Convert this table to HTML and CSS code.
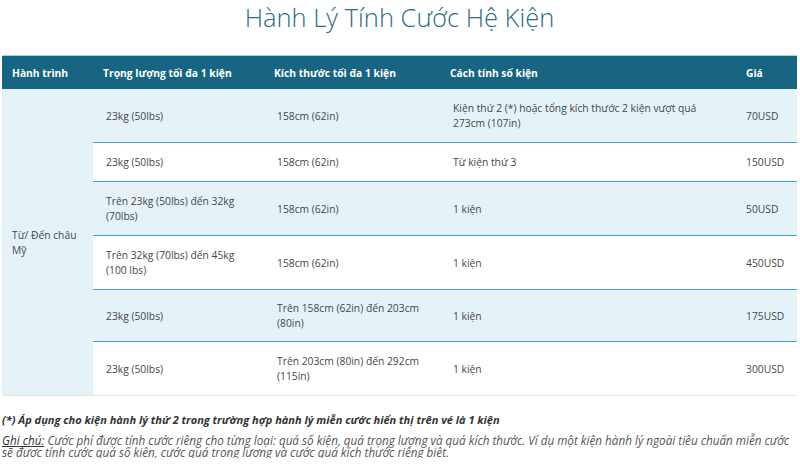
FILE: index.html
```html
<!DOCTYPE html>
<html lang="vi">
<head>
<meta charset="utf-8">
<title>Hành Lý Tính Cước Hệ Kiện</title>
<link rel="stylesheet" href="styles.css">
</head>
<body>
<div class="page">
  <h1 class="title">Hành Lý Tính Cước Hệ Kiện</h1>
  <table class="fees">
    <colgroup>
      <col class="c1"><col class="c2"><col class="c3"><col class="c4"><col class="c5">
    </colgroup>
    <thead>
      <tr>
        <th>Hành trình</th>
        <th>Trọng lượng tối đa 1 kiện</th>
        <th>Kích thước tối đa 1 kiện</th>
        <th>Cách tính số kiện</th>
        <th>Giá</th>
      </tr>
    </thead>
    <tbody>
      <tr class="alt first">
        <td class="route" rowspan="6">Từ/ Đến châu Mỹ</td>
        <td>23kg (50lbs)</td>
        <td>158cm (62in)</td>
        <td>Kiện thứ 2 (*) hoặc tổng kích thước 2 kiện vượt quá 273cm (107in)</td>
        <td class="price">70USD</td>
      </tr>
      <tr>
        <td>23kg (50lbs)</td>
        <td>158cm (62in)</td>
        <td>Từ kiện thứ 3</td>
        <td class="price">150USD</td>
      </tr>
      <tr class="alt">
        <td>Trên 23kg (50lbs) đến 32kg (70lbs)</td>
        <td>158cm (62in)</td>
        <td>1 kiện</td>
        <td class="price">50USD</td>
      </tr>
      <tr>
        <td>Trên 32kg (70lbs) đến 45kg (100 lbs)</td>
        <td>158cm (62in)</td>
        <td>1 kiện</td>
        <td class="price">450USD</td>
      </tr>
      <tr class="alt tight">
        <td>23kg (50lbs)</td>
        <td>Trên 158cm (62in) đến 203cm (80in)</td>
        <td>1 kiện</td>
        <td class="price">175USD</td>
      </tr>
      <tr class="last">
        <td>23kg (50lbs)</td>
        <td>Trên 203cm (80in) đến 292cm (115in)</td>
        <td>1 kiện</td>
        <td class="price">300USD</td>
      </tr>
    </tbody>
  </table>
  <p class="star">(*) Áp dụng cho kiện hành lý thứ 2 trong trường hợp hành lý miễn cước hiển thị trên vé là 1 kiện</p>
  <p class="note"><span class="note-label">Ghi chú:</span> Cước phí được tính cước riêng cho từng loại: quá số kiện, quá trọng lượng và quá kích thước. Ví dụ một kiện hành lý ngoài tiêu chuẩn miễn cước sẽ được tính cước quá số kiện, cước quá trọng lượng và cước quá kích thước riêng biệt.</p>
</div>
</body>
</html>
```

FILE: styles.css
```css
html, body {
  margin: 0;
  padding: 0;
  background: #ffffff;
}

body {
  font-family: "Open Sans", "Noto Sans", "DejaVu Sans", sans-serif;
  color: #474747;
}

.page {
  padding: 0 3px 0 2px;
}

.title {
  margin: 0;
  height: 55px;
  font-size: 25.5px;
  line-height: 34px;
  font-weight: 300;
  color: #2b6d8a;
  text-align: center;
}

.fees {
  width: 795px;
  border-collapse: collapse;
  table-layout: fixed;
  font-size: 10.3px;
}

.c1 { width: 91px; }
.c2 { width: 171px; }
.c3 { width: 176px; }
.c4 { width: 296px; }
.c5 { width: 61px; }

.fees thead tr {
  background: #176582;
  border-top: 1px solid #a6d3e3;
}

.fees th {
  color: #ffffff;
  font-weight: 700;
  text-align: left;
  height: 33px;
  padding: 0 0 0 10px;
  line-height: 14px;
}

.fees td {
  padding: 12px 10px 11px 13px;
  line-height: 15px;
  vertical-align: middle;
  border-top: 1px solid #3fa4c9;
}

.fees tr.tight td {
  padding-top: 11px;
  padding-bottom: 10px;
}

.fees td.price {
  padding-left: 10px;
}

.fees tr.first td {
  border-top: none;
}

.fees tr.alt {
  background: #e5f3f8;
}

.fees tr.last td {
  border-bottom: 1px solid #dde8ec;
}

.fees td.route {
  background: #e5f3f8;
  border-top: none;
  border-bottom: 1px solid #dde8ec;
  padding-left: 10px;
  padding-right: 6px;
}

.star {
  margin: 17px 0 0 0;
  font-size: 11px;
  line-height: 14px;
  font-weight: 700;
  font-style: italic;
  color: #333333;
}

.note {
  margin: 7px 0 0 0;
  font-size: 11.7px;
  line-height: 12px;
  font-style: italic;
  color: #555555;
}

.note-label {
  text-decoration: underline;
  color: #333333;
}
```
